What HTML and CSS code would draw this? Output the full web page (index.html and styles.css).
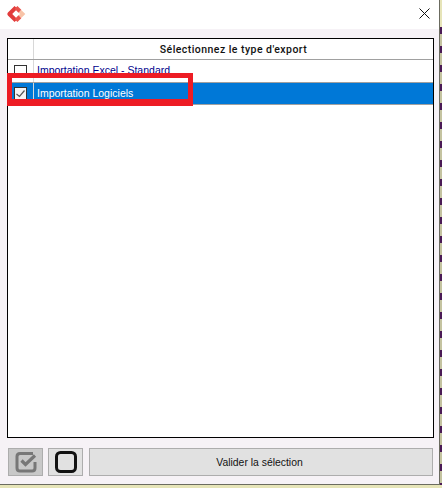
FILE: index.html
```html
<!DOCTYPE html>
<html lang="en">
<head>
    <meta charset="UTF-8">
    <meta name="viewport" content="width=device-width, initial-scale=1.0">
    <title>Type d'export</title>
    <link rel="stylesheet" href="styles.css">
</head>
<body>
    <div class="window">
        <div class="title-bar">
            <svg class="logo" width="20" height="20" viewBox="0 0 18 18">
                <path d="M12.500 6.500 L15 9 L12.500 11.500" fill="none" stroke="#f8c4a8" stroke-width="3.400"/>
                <path d="M9 3 L3 9 L9 15" fill="none" stroke="#e23c3c" stroke-width="3.600" stroke-linejoin="round"/>
                <path d="M9 3 L12.500 6.500 M9 15 L12.500 11.500" fill="none" stroke="#e9534c" stroke-width="3.600"/>
            </svg>
            <svg class="close" width="11" height="11" viewBox="0 0 11 11">
                <path d="M0.500 0.500 L10.500 10.500 M10.500 0.500 L0.500 10.500" stroke="#111" stroke-width="1"/>
            </svg>
        </div>

        <div class="content">
            <div class="list">
                <div class="list-header">
                    <div class="check-col"></div>
                    <div class="header-label">Sélectionnez le type d'export</div>
                </div>
                <div class="row">
                    <div class="check-col"><span class="checkbox"></span></div>
                    <div class="row-label">Importation Excel - Standard</div>
                </div>
                <div class="row selected">
                    <div class="check-col">
                        <span class="checkbox">
                            <svg width="13" height="13" viewBox="0 0 13 13">
                                <path d="M2.500 7 L5.500 9.500 L10.500 3.500" fill="none" stroke="#555" stroke-width="1.200"/>
                            </svg>
                        </span>
                    </div>
                    <div class="row-label">Importation Logiciels</div>
                </div>
                <div class="highlight"></div>
            </div>

            <div class="actions">
                <button class="icon-btn pressed" type="button">
                    <svg width="24" height="24" viewBox="0 0 24 24">
                        <path d="M19 3.500 H6 Q3 3.500 3 6.500 V18 Q3 21 6 21 H18 Q21 21 21 18 V12" fill="none" stroke="#777" stroke-width="3"/>
                        <path d="M7.500 10.500 L11.500 14.500 L21 5.500" fill="none" stroke="#777" stroke-width="3.200"/>
                    </svg>
                </button>
                <button class="icon-btn" type="button">
                    <svg width="24" height="24" viewBox="0 0 24 24">
                        <rect x="2.500" y="2.500" width="19" height="19" rx="4" fill="none" stroke="#111" stroke-width="3"/>
                    </svg>
                </button>
                <button class="validate-btn" type="button">Valider la sélection</button>
            </div>
        </div>
    </div>
</body>
</html>
```

FILE: styles.css
```css
html, body {
    margin: 0;
    padding: 0;
}

body {
    width: 442px;
    height: 488px;
    overflow: hidden;
    background: repeating-linear-gradient(180deg, #4a1a55 0, #4a1a55 7px, #c4c3a0 7px, #c4c3a0 19px) right 27px / 2px 458px no-repeat, #e6e4b8;
    font-family: "Liberation Sans", Arial, sans-serif;
}

.window {
    width: 440px;
    height: 485px;
    display: flex;
    flex-direction: column;
    box-sizing: border-box;
    border-right: 1px solid #6b6b60;
    border-bottom: 1px solid #6b6b60;
    background: #f6f2f6;
}

.title-bar {
    height: 29px;
    flex: none;
    display: flex;
    align-items: center;
    justify-content: space-between;
    padding: 0 9px 3px 6px;
    box-sizing: border-box;
    background: #fff;
}

.logo {
    margin-top: 2px;
}

.content {
    flex: 1;
    display: flex;
    flex-direction: column;
    padding: 9px 5px 8px 7px;
}

.list {
    position: relative;
    height: 400px;
    box-sizing: border-box;
    border: 1px solid #000;
    background: #fff;
    flex: none;
}

.list-header {
    display: flex;
    height: 21px;
    box-sizing: border-box;
    border-bottom: 1px solid #a0a0a0;
    font-family: Roboto, Arial, sans-serif;
    font-size: 10.500px;
    font-weight: 500;
    color: #111;
}

.header-label {
    flex: 1;
    text-align: center;
    line-height: 22px;
    letter-spacing: 0.450px;
}

.check-col {
    width: 26px;
    flex: none;
    box-sizing: border-box;
    border-right: 1px solid #d8d8d8;
    display: flex;
    align-items: center;
    justify-content: center;
}

.row {
    display: flex;
    height: 22px;
    box-sizing: border-box;
    font-size: 10.500px;
    color: #00008b;
}

.row-label {
    padding-left: 3px;
    line-height: 21px;
}

.row.selected {
    background: #0078d7;
    color: #fff;
    border-top: 1px solid #a0a0a0;
    border-bottom: 1px solid #a0a0a0;
    height: 23px;
}

.row.selected .row-label {
    line-height: 20px;
}

.checkbox {
    width: 13px;
    height: 13px;
    display: block;
    box-sizing: border-box;
    border: 1px solid #333;
    background: #fff;
}

.selected .checkbox {
    background: #f4f4f4;
}

.checkbox svg {
    display: block;
    margin: -1px;
}

/* annotation drawn over the list */
.highlight {
    position: absolute;
    left: -1px;
    top: 34px;
    width: 186px;
    height: 33px;
    box-sizing: border-box;
    border: 5px solid #ed1c24;
    border-bottom-width: 7px;
}

.actions {
    display: flex;
    gap: 5px;
    margin-top: 10px;
    margin-left: 1px;
    margin-right: 1px;
    height: 28px;
}

.icon-btn {
    width: 35px;
    height: 28px;
    padding: 0;
    display: flex;
    align-items: center;
    justify-content: center;
    box-sizing: border-box;
    border: 1px solid #adadad;
    background: #e1e1e1;
}

.icon-btn.pressed {
    background: #c8c8c8;
}

.validate-btn {
    flex: 1;
    margin-left: 1px;
    padding: 0 8px 0 5px;
    box-sizing: border-box;
    border: 1px solid #adadad;
    background: #e1e1e1;
    font-family: "Liberation Sans", Arial, sans-serif;
    font-size: 10.400px;
    color: #111;
}
```
